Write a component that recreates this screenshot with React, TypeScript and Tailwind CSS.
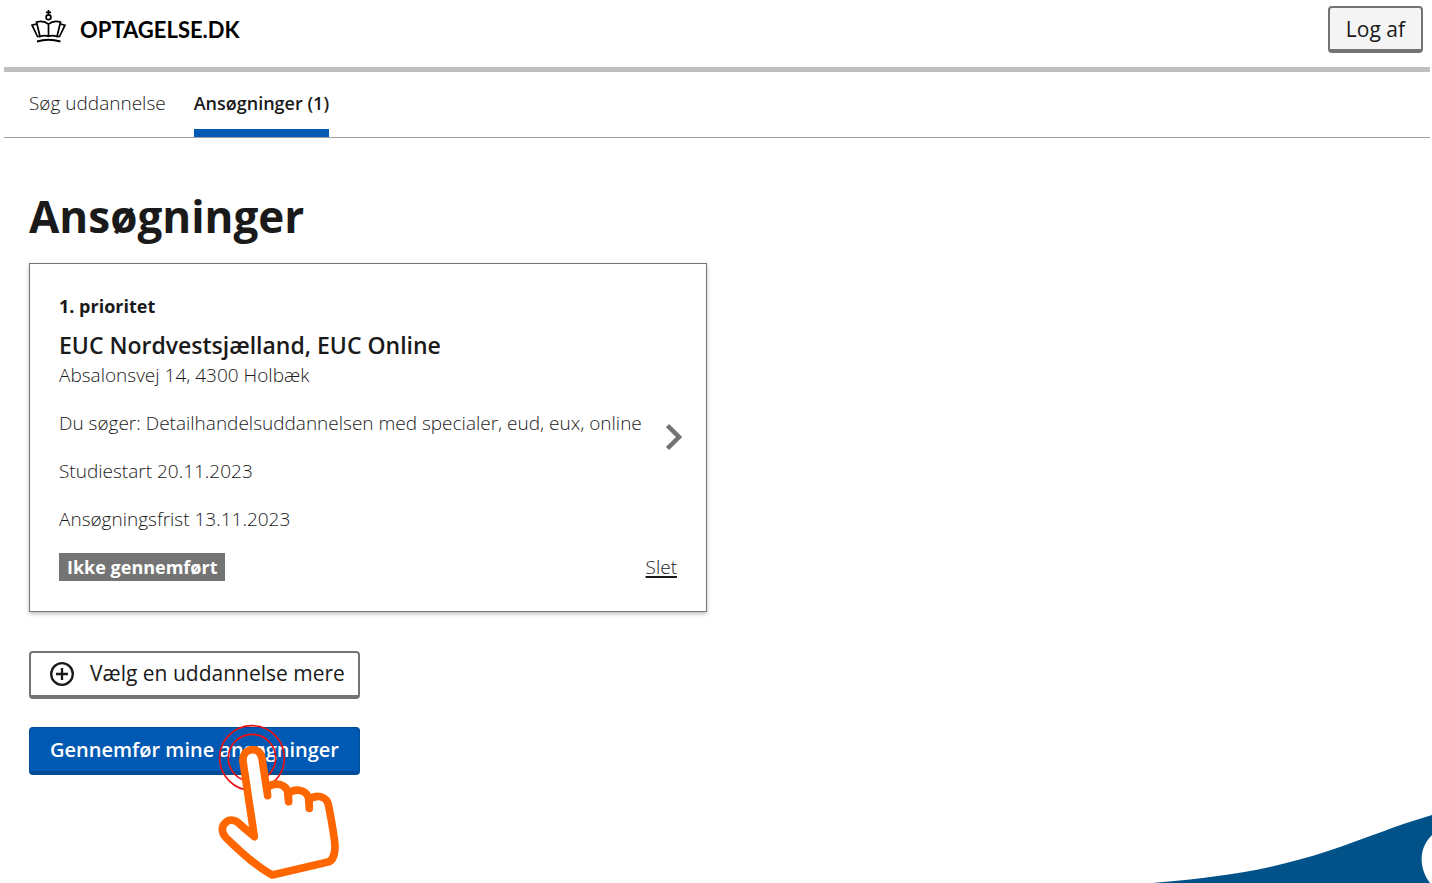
/**
 * Applications page
 * Lists the applicant's chosen educations with actions
 */

interface Application {
  priority: number;
  school: string;
  address: string;
  education: string;
  studyStart: string;
  deadline: string;
  status: string;
}

const applications: Application[] = [
  {
    priority: 1,
    school: 'EUC Nordvestsjælland, EUC Online',
    address: 'Absalonsvej 14, 4300 Holbæk',
    education: 'Detailhandelsuddannelsen med specialer, eud, eux, online',
    studyStart: '20.11.2023',
    deadline: '13.11.2023',
    status: 'Ikke gennemført',
  },
];

function CrownLogo() {
  return (
    <svg className="h-[34px] w-9" viewBox="0 0 36 34" fill="none" stroke="black" strokeWidth={1.7} aria-hidden="true">
      <path d="M17.5 0v5M15 2.3h5" />
      <circle cx="17.5" cy="7.2" r="2.4" />
      <path d="M17.5 14.2C14.5 11.5 9.5 10.8 5.5 12L9 26.500C12 25.300 15 25.300 17.500 26.300C20 25.300 23 25.300 26 26.500L29.500 12C25.500 10.800 20.500 11.500 17.500 14.200V26" />
      <path d="M5.500 14L1 15.200L6.500 26.500H9M29.500 14L34 15.200L28.500 26.500H26" />
      <path d="M6 31.500C13 29.300 22 29.300 29.500 31.500" strokeWidth={2} />
    </svg>
  );
}

function PointingHand() {
  return (
    <svg
      className="pointer-events-none absolute -top-3 left-[181px] h-[168px] w-[140px]"
      viewBox="0 0 420 504"
      fill="none"
      aria-hidden="true"
    >
      <circle cx="126" cy="129" r="97" stroke="#ee1111" strokeWidth={5} />
      <circle cx="126" cy="129" r="71" stroke="#ee1111" strokeWidth={5} />
      <path
        d="M133 365L99 139C95 98 150 90 156 130L173 242L170 218C195 199 229 206 235 236L236 260L233 236C259 217 291 225 297 253L298 280L296 254C321 236 351 243 356 273C364 315 372 355 375 392C375 412 370 437 354 441L187 480C153 463 93 412 48 368C16 335 61 293 92 330Z"
        fill="white"
        stroke="#ff6600"
        strokeWidth={23}
        strokeLinejoin="round"
      />
    </svg>
  );
}

function ApplicationCard({ application }: { application: Application }) {
  return (
    <article className="flex items-center border border-[#747474] px-[29px] pt-7 pb-[30px] shadow-[0_2px_4px_rgba(0,0,0,0.25)]">
      <div className="min-w-0 flex-1">
        <p className="text-lg leading-7 font-bold">{application.priority}. prioritet</p>
        <h2 className="mt-[9px] text-[23px] leading-8 font-semibold">{application.school}</h2>
        <p className="text-[19px] leading-7 font-light">{application.address}</p>
        <p className="mt-5 text-[19px] leading-7 font-light whitespace-nowrap">Du søger: {application.education}</p>
        <p className="mt-5 text-[19px] leading-7 font-light">Studiestart {application.studyStart}</p>
        <p className="mt-5 text-[19px] leading-7 font-light">Ansøgningsfrist {application.deadline}</p>
        <div className="mt-5 flex">
          <span className="bg-[#747474] px-2 text-lg leading-7 font-bold text-white">{application.status}</span>
        </div>
      </div>
      <div className="flex w-9 flex-col items-end self-stretch">
        <svg className="mt-[131px] -mr-[5px] h-7 w-4" viewBox="0 0 16 28" fill="none" stroke="#747474" strokeWidth={4.5} aria-hidden="true">
          <path d="M1.500 2.500L13 14L1.500 25.500" />
        </svg>
        <a href="#slet" className="mt-auto text-[19px] leading-7 font-light underline decoration-2 underline-offset-2">
          Slet
        </a>
      </div>
    </article>
  );
}

export default function App() {
  return (
    <div className="flex min-h-screen flex-col overflow-x-hidden bg-white font-['Open_Sans',sans-serif] text-[#1a1a1a]">
      <div className="mr-0.5 ml-1">
        <header className="flex h-[72px] items-start justify-between border-b-5 border-[#bfbfbf] pr-[7px] pl-[27px]">
          <a href="#forside" className="mt-2.5 flex items-start gap-[13px] font-[Lato,sans-serif] text-[22px] leading-10 font-bold text-black">
            <CrownLogo />
            OPTAGELSE.DK
          </a>
          <button className="mt-1.5 h-[47px] rounded-[4px] border-2 border-b-4 border-[#747474] bg-[#f5f5f5] px-4 text-[21px] leading-9">
            Log af
          </button>
        </header>
        <nav className="flex h-[66px] gap-7 border-b border-[#a0a0a0] pl-[25px]">
          <a href="#soeg" className="pt-[17px] text-[19px] leading-7 font-light">
            Søg uddannelse
          </a>
          <a href="#ansoegninger" className="border-b-8 border-[#0059b3] pt-[17px] text-lg leading-7 font-semibold">
            Ansøgninger (1)
          </a>
        </nav>
      </div>

      <main className="max-w-[707px] pl-[29px]">
        <h1 className="mt-[46px] text-[44px] leading-[64px] font-bold">Ansøgninger</h1>
        <div className="mt-[15px]">
          {applications.map((application) => (
            <ApplicationCard key={application.priority} application={application} />
          ))}
        </div>
        <div className="mt-[39px] flex w-[331px] flex-col gap-7">
          <button className="flex h-12 items-center rounded-[4px] border-2 border-b-4 border-[#747474] pl-[19px] text-[21px]">
            <svg className="mr-4 size-6" viewBox="0 0 24 24" fill="none" stroke="#1a1a1a" strokeWidth={2.3} aria-hidden="true">
              <circle cx="12" cy="12" r="10.8" />
              <path d="M12 6v12M6 12h12" />
            </svg>
            Vælg en uddannelse mere
          </button>
          <div className="relative">
            <button className="h-12 w-full rounded-[4px] border border-b-4 border-[#004c99] bg-[#0059b3] text-xl font-semibold whitespace-nowrap text-white">
              Gennemfør mine ansøgninger
            </button>
            <PointingHand />
          </div>
        </div>
      </main>

      <footer className="mt-auto flex justify-end">
        <svg className="h-[69px] w-[280px]" viewBox="0 0 280 69" aria-hidden="true">
          <path d="M0 69C70 63 118 56 176 37C215 24 245 11 280 1V21C266 35 267 54 278 69Z" fill="#005289" />
        </svg>
      </footer>
    </div>
  );
}
